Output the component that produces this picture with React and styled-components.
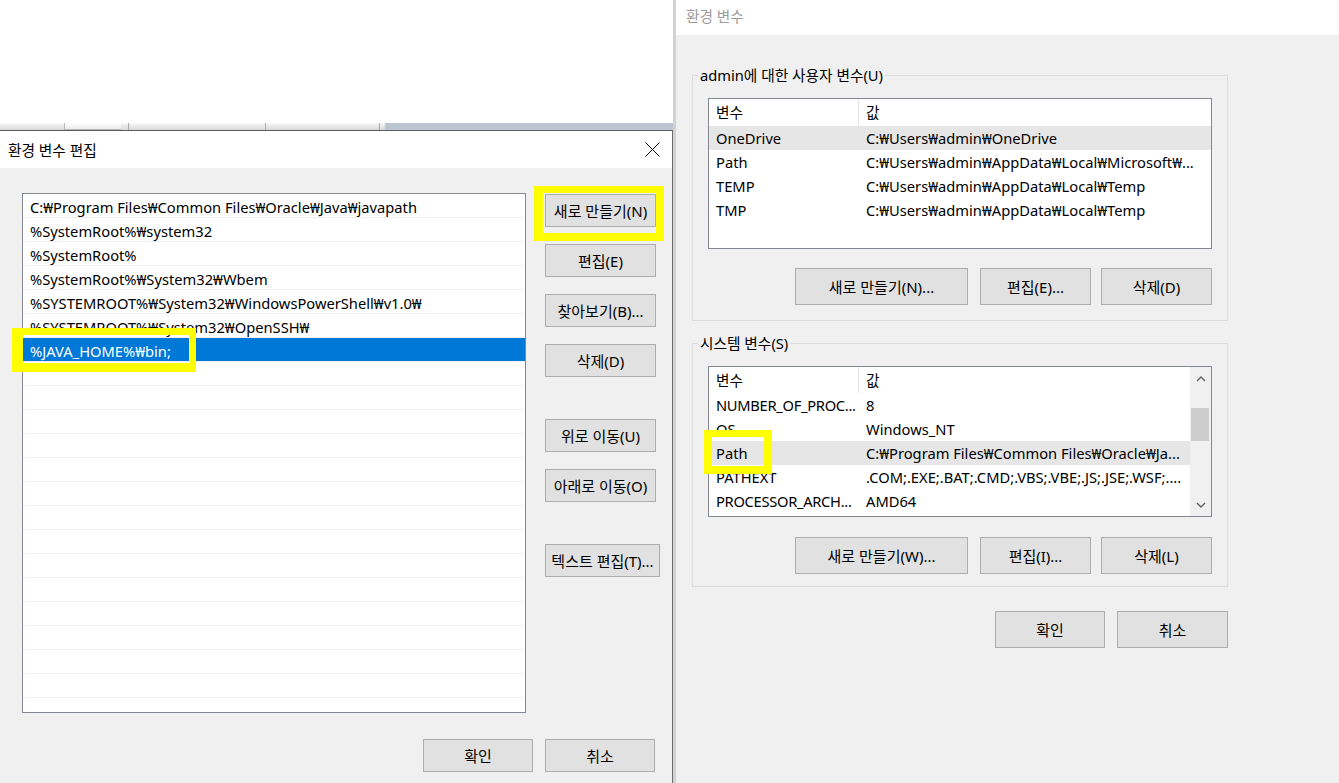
import React from 'react';
import styled, { createGlobalStyle } from 'styled-components';

const GlobalStyle = createGlobalStyle`
  html, body { margin: 0; padding: 0; }
  body {
    width: 1339px;
    height: 783px;
    overflow: hidden;
    background: #fff;
    font-family: "Noto Sans", "Noto Sans CJK KR", sans-serif;
    font-size: 14.7px;
    color: #000;
  }
  * { box-sizing: border-box; }
`;

const Desktop = styled.div`
  position: relative;
  display: flex;
  width: 1339px;
  height: 783px;
  overflow: hidden;
`;

/* ---------- left side: window behind + edit dialog ---------- */

const LeftColumn = styled.div`
  width: 673px;
  flex: none;
  display: flex;
  flex-direction: column;
`;

const BackWindow = styled.div`
  height: 123px;
  background: #fff;
`;

const TabStrip = styled.div`
  height: 7px;
  display: flex;
  background: linear-gradient(#f7f7f7, #d8d8d8);
`;

const StripPart = styled.div`
  width: ${p => p.$w}px;
  flex: ${p => (p.$grow ? 1 : 'none')};
  border-right: ${p => (p.$sep ? '1px solid #a9a9a9' : 'none')};
  background: ${p =>
    p.$blue ? '#bcc5d2' : p.$tab ? 'linear-gradient(#fdfdfd, #ececec)' : 'transparent'};
  border-left: ${p => (p.$tab ? '1px solid #b8b8b8' : 'none')};
  border-bottom: ${p => (p.$tab ? '1px solid #b8b8b8' : 'none')};
`;

const EditDialog = styled.div`
  flex: 1;
  display: flex;
  flex-direction: column;
  background: #f0f0f0;
  border-top: 1px solid #5c5c5c;
  border-right: 1px solid #6c6c6c;
`;

const TitleBar = styled.div`
  height: 37px;
  flex: none;
  display: flex;
  align-items: center;
  justify-content: space-between;
  padding: 0 12px 0 8px;
  background: #fff;
  color: #000;
`;

const DialogBody = styled.div`
  display: flex;
  flex-direction: column;
  padding: 25px 17px 0 22px;
`;

const TopSection = styled.div`
  display: flex;
  align-items: flex-start;
`;

const PathList = styled.div`
  width: 504px;
  height: 520px;
  flex: none;
  background: #fff;
  border: 1px solid #828790;
  overflow: hidden;
`;

const PathRow = styled.div`
  height: 24px;
  padding-left: 7px;
  line-height: 27px;
  white-space: nowrap;
  overflow: hidden;
  border-bottom: 1px solid #efefef;
  background: ${p => (p.$selected ? '#0078d7' : '#fff')};
  color: ${p => (p.$selected ? '#fff' : '#000')};
`;

const ButtonColumn = styled.div`
  display: flex;
  flex-direction: column;
  margin-left: 19px;
  padding-top: 1px;
`;

const Button = styled.button`
  width: ${p => p.$w || 111}px;
  height: ${p => p.$h || 33}px;
  margin-top: ${p => p.$mt || 0}px;
  padding: 0;
  background: #e1e1e1;
  border: 1px solid #adadad;
  border-radius: 0;
  font-family: "Noto Sans", "Noto Sans CJK KR", sans-serif;
  font-size: 15px;
  color: #000;
  white-space: nowrap;
  flex: none;
`;

const ButtonRow = styled.div`
  display: flex;
  justify-content: flex-end;
  gap: ${p => p.$gap || 12}px;
  margin-top: ${p => p.$mt || 0}px;
`;

/* ---------- right side: environment variables window ---------- */

const RightWindow = styled.div`
  flex: 1;
  display: flex;
  flex-direction: column;
  background: #f0f0f0;
  border-left: 3px solid #d2d2d2;
`;

const RightTitle = styled.div`
  height: 35px;
  flex: none;
  padding-left: 10px;
  line-height: 32px;
  background: #fff;
  color: #9b9b9b;
`;

const RightBody = styled.div`
  width: 552px;
  padding: 40px 0 0 16px;
  display: flex;
  flex-direction: column;
`;

const GroupBox = styled.div`
  position: relative;
  border: 1px solid #dcdcdc;
  padding: 22px 15px ${p => p.$pb}px;
  margin-top: ${p => p.$mt || 0}px;
`;

const GroupLabel = styled.span`
  position: absolute;
  top: -11px;
  left: 5px;
  padding: 0 2px;
  line-height: 20px;
  background: #f0f0f0;
`;

const VarList = styled.div`
  width: 504px;
  height: 151px;
  display: flex;
  background: #fff;
  border: 1px solid #828790;
  overflow: hidden;
`;

const VarTable = styled.div`
  flex: 1;
  min-width: 0;
`;

const VarRow = styled.div`
  display: grid;
  grid-template-columns: 150px 1fr;
  height: ${p => p.$h || 24}px;
  line-height: ${p => p.$h || 24}px;
  background: ${p => (p.$active ? '#e6e6e6' : '#fff')};
`;

const Cell = styled.div`
  padding-left: 7px;
  white-space: nowrap;
  overflow: hidden;
  letter-spacing: ${p => (p.$tight ? '-0.3px' : 'normal')};
  border-right: ${p => (p.$head ? '1px solid #e5e5e5' : 'none')};
`;

const ScrollBar = styled.div`
  width: 21px;
  flex: none;
  display: flex;
  flex-direction: column;
  background: #f0f0f0;
`;

const ScrollArrow = styled.div`
  height: 23px;
  flex: none;
  display: flex;
  align-items: center;
  justify-content: center;
`;

const ScrollTrack = styled.div`
  flex: 1;
  padding: 18px 2px 0 1px;
`;

const Thumb = styled.div`
  height: 33px;
  background: #cdcdcd;
`;

const Highlight = styled.div`
  position: absolute;
  left: ${p => p.$x}px;
  top: ${p => p.$y}px;
  width: ${p => p.$w}px;
  height: ${p => p.$h}px;
  border-style: solid;
  border-color: #ffff00;
  border-width: ${p => p.$bw};
  pointer-events: none;
`;

const CloseIcon = () => (
  <svg width="15" height="15" viewBox="0 0 15 15">
    <path d="M0.5 0.5 L14.5 14.5 M14.5 0.5 L0.5 14.5" stroke="#000" strokeWidth="1" fill="none" />
  </svg>
);

const Chevron = ({ down }) => (
  <svg width="10" height="6" viewBox="0 0 10 6">
    <path
      d={down ? 'M1 1 L5 5 L9 1' : 'M1 5 L5 1 L9 5'}
      stroke="#606060"
      strokeWidth="1.4"
      fill="none"
    />
  </svg>
);

const paths = [
  'C:₩Program Files₩Common Files₩Oracle₩Java₩javapath',
  '%SystemRoot%₩system32',
  '%SystemRoot%',
  '%SystemRoot%₩System32₩Wbem',
  '%SYSTEMROOT%₩System32₩WindowsPowerShell₩v1.0₩',
  '%SYSTEMROOT%₩System32₩OpenSSH₩',
  '%JAVA_HOME%₩bin;',
];

const userVars = [
  ['OneDrive', 'C:₩Users₩admin₩OneDrive', true],
  ['Path', 'C:₩Users₩admin₩AppData₩Local₩Microsoft₩...'],
  ['TEMP', 'C:₩Users₩admin₩AppData₩Local₩Temp'],
  ['TMP', 'C:₩Users₩admin₩AppData₩Local₩Temp'],
];

const sysVars = [
  ['NUMBER_OF_PROC...', '8'],
  ['OS', 'Windows_NT'],
  ['Path', 'C:₩Program Files₩Common Files₩Oracle₩Ja...', true],
  ['PATHEXT', '.COM;.EXE;.BAT;.CMD;.VBS;.VBE;.JS;.JSE;.WSF;....'],
  ['PROCESSOR_ARCH...', 'AMD64'],
];

const VarBox = ({ rows, headH, scroll }) => (
  <VarList>
    <VarTable>
      <VarRow $h={headH}>
        <Cell $head>변수</Cell>
        <Cell>값</Cell>
      </VarRow>
      {rows.map(([name, value, active]) => (
        <VarRow key={name} $active={active}>
          <Cell $tight={name.length > 14}>{name}</Cell>
          <Cell>{value}</Cell>
        </VarRow>
      ))}
    </VarTable>
    {scroll && (
      <ScrollBar>
        <ScrollArrow><Chevron /></ScrollArrow>
        <ScrollTrack><Thumb /></ScrollTrack>
        <ScrollArrow><Chevron down /></ScrollArrow>
      </ScrollBar>
    )}
  </VarList>
);

export default function App() {
  const emptyRows = Array.from({ length: 16 }, (_, i) => i);
  return (
    <>
      <GlobalStyle />
      <Desktop>
        <LeftColumn>
          <BackWindow />
          <TabStrip>
            <StripPart $w={64} />
            <StripPart $w={57} $tab />
            <StripPart $w={8} $sep />
            <StripPart $w={137} $sep />
            <StripPart $w={114} $sep />
            <StripPart $w={5} />
            <StripPart $grow $blue />
          </TabStrip>
          <EditDialog>
            <TitleBar>
              <span>환경 변수 편집</span>
              <CloseIcon />
            </TitleBar>
            <DialogBody>
              <TopSection>
                <PathList>
                  {paths.map((p, i) => (
                    <PathRow key={p} $selected={i === paths.length - 1}>{p}</PathRow>
                  ))}
                  {emptyRows.map(i => <PathRow key={i} />)}
                </PathList>
                <ButtonColumn>
                  <Button>새로 만들기(N)</Button>
                  <Button $mt={17}>편집(E)</Button>
                  <Button $mt={17}>찾아보기(B)...</Button>
                  <Button $mt={17}>삭제(D)</Button>
                  <Button $mt={42}>위로 이동(U)</Button>
                  <Button $mt={17}>아래로 이동(O)</Button>
                  <Button $mt={42} $w={115}>텍스트 편집(T)...</Button>
                </ButtonColumn>
              </TopSection>
              <ButtonRow $mt={26}>
                <Button $w={110}>확인</Button>
                <Button $w={110}>취소</Button>
              </ButtonRow>
            </DialogBody>
          </EditDialog>
        </LeftColumn>

        <RightWindow>
          <RightTitle>환경 변수</RightTitle>
          <RightBody>
            <GroupBox $pb={15}>
              <GroupLabel>admin에 대한 사용자 변수(U)</GroupLabel>
              <VarBox rows={userVars} headH={27} />
              <ButtonRow $mt={19} $gap={12}>
                <Button $w={173} $h={37}>새로 만들기(N)...</Button>
                <Button $w={111} $h={37}>편집(E)...</Button>
                <Button $w={111} $h={37} style={{ marginLeft: -2 }}>삭제(D)</Button>
              </ButtonRow>
            </GroupBox>
            <GroupBox $pb={12} $mt={22}>
              <GroupLabel>시스템 변수(S)</GroupLabel>
              <VarBox rows={sysVars} headH={26} scroll />
              <ButtonRow $mt={20} $gap={12}>
                <Button $w={173} $h={37}>새로 만들기(W)...</Button>
                <Button $w={111} $h={37}>편집(I)...</Button>
                <Button $w={111} $h={37} style={{ marginLeft: -2 }}>삭제(L)</Button>
              </ButtonRow>
            </GroupBox>
            <ButtonRow $mt={24} $gap={12}>
              <Button $w={110} $h={37}>확인</Button>
              <Button $w={111} $h={37}>취소</Button>
            </ButtonRow>
          </RightBody>
        </RightWindow>

        <Highlight $x={534} $y={186} $w={130} $h={55} $bw="7px 8px 8px 9px" />
        <Highlight $x={12} $y={328} $w={184} $h={44} $bw="7px 7px 9px 11px" />
        <Highlight $x={704} $y={430} $w={68} $h={44} $bw="7px 8px 8px 8px" />
      </Desktop>
    </>
  );
}
